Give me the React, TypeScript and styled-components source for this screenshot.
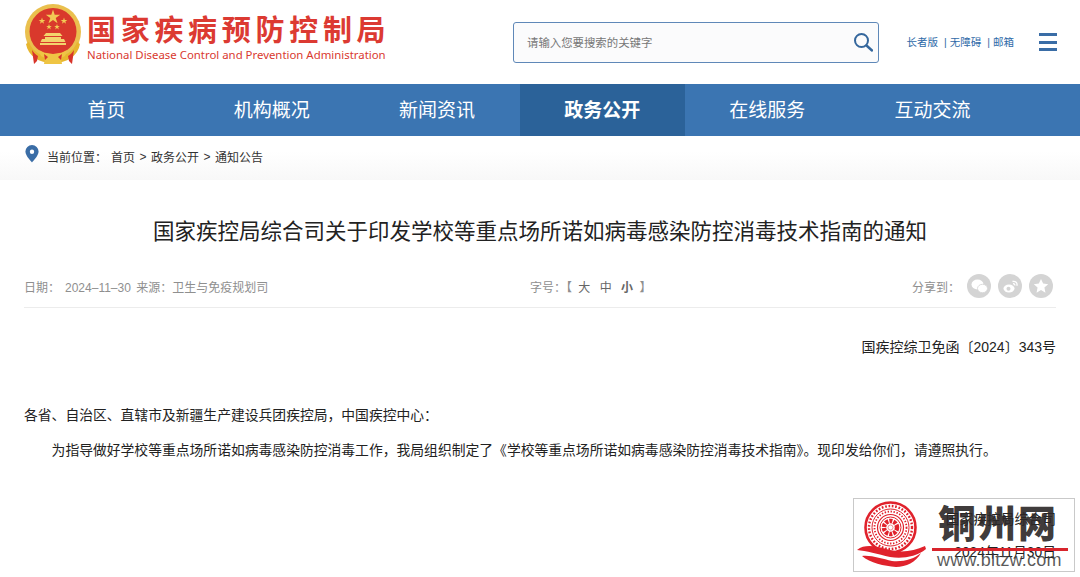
import * as React from 'react';
import styled, { createGlobalStyle } from 'styled-components';

const GlobalStyle = createGlobalStyle`
    html, body {
        margin: 0;
        padding: 0;
        background: #fff;
    }
    body {
        width: 1080px;
        height: 577px;
        overflow: hidden;
        font-family: "Liberation Sans", "Noto Sans CJK SC", sans-serif;
    }
`;

const navList = [
    { id: 'home', label: '首页' },
    { id: 'org', label: '机构概况' },
    { id: 'news', label: '新闻资讯' },
    { id: 'gov', label: '政务公开', active: true },
    { id: 'online', label: '在线服务' },
    { id: 'talk', label: '互动交流' },
];

const Page = styled.div`
    position: relative;
    width: 1080px;
    height: 577px;
    overflow: hidden;
`;

const Header = styled.header`
    display: flex;
    align-items: flex-start;
    height: 84px;
    padding: 4px 23px 0 25px;
    box-sizing: border-box;
`;

const Brand = styled.div`
    display: flex;
    width: 488px;
    flex: none;
`;

const BrandText = styled.div`
    display: flex;
    flex-direction: column;
    margin-left: 6px;
    padding-top: 6px;
`;

const BrandName = styled.div`
    font-family: "Noto Sans CJK SC", sans-serif;
    font-size: 29px;
    font-weight: 700;
    line-height: 36px;
    letter-spacing: 4.7px;
    color: #dc3a32;
    white-space: nowrap;
`;

const BrandEnglish = styled.div`
    font-family: "Noto Sans", sans-serif;
    font-size: 11.4px;
    line-height: 16px;
    margin-top: 1px;
    color: #d9392f;
    white-space: nowrap;
`;

const Search = styled.div`
    display: flex;
    align-items: center;
    justify-content: space-between;
    width: 366px;
    height: 41px;
    margin-top: 18px;
    padding: 0 4px 2px 13px;
    box-sizing: border-box;
    background: #fbfbfc;
    border: 1px solid #5f88b8;
    border-radius: 3px;
    font-size: 11.4px;
    color: #777;
`;

const SearchIcon = styled.svg`
    margin-right: 1px;
`;

const HeaderLinks = styled.div`
    display: flex;
    align-items: center;
    margin-left: 28px;
    margin-top: 31px;
    font-size: 10.5px;
    line-height: 14px;
    color: #2f6aa8;
    white-space: nowrap;
`;

const HeaderLink = styled.span`
    & + &::before {
        content: '|';
        margin: 0 3px 0 6px;
    }
`;

const Burger = styled.div`
    display: flex;
    flex-direction: column;
    gap: 4.5px;
    width: 18px;
    margin-left: 25px;
    margin-top: 29px;
`;

const BurgerLine = styled.i`
    display: block;
    height: 3px;
    background: #3a6da6;
`;

const Nav = styled.nav`
    display: flex;
    height: 52px;
    padding-left: 24px;
    background: #3b75b2;
`;

const NavItem = styled.div<{ $active?: boolean }>`
    display: flex;
    align-items: center;
    justify-content: center;
    width: 165.2px;
    padding-bottom: 3px;
    box-sizing: border-box;
    font-size: 19px;
    font-weight: ${props => (props.$active ? 700 : 400)};
    color: #fff;
    background: ${props => (props.$active ? '#2b6299' : 'transparent')};
`;

const Crumb = styled.div`
    display: flex;
    align-items: center;
    height: 44px;
    padding: 0 0 3px 25px;
    box-sizing: border-box;
    font-size: 12px;
    color: #333;
    background: linear-gradient(#fff 35%, #f8f8f8);
`;

const PinIcon = styled.svg`
    margin-top: -6px;
`;

const CrumbLabel = styled.span`
    margin: 0 4px 0 8px;
`;

const CrumbSep = styled.span`
    margin: 0 4.5px;
`;

const Main = styled.main`
    padding: 0 24px;
`;

const Title = styled.h1`
    margin: 37px 0 0;
    font-size: 21.5px;
    font-weight: 400;
    line-height: 30px;
    text-align: center;
    color: #222;
`;

const Meta = styled.div`
    display: grid;
    grid-template-columns: 506px 1fr auto;
    align-items: center;
    height: 36px;
    margin-top: 21px;
    padding-bottom: 3px;
    border-bottom: 1px solid #ececec;
    font-size: 12px;
    color: #8f8f8f;
`;

const MetaDate = styled.span`
    margin: 0 2px 0 5px;
`;

const SizeOptions = styled.span`
    & b {
        font-weight: 700;
        color: #555;
    }
    & em {
        font-style: normal;
        margin: 0 3px;
        color: #666;
    }
`;

const Share = styled.div`
    display: flex;
    align-items: center;
    gap: 7px;
    margin-right: 3px;
`;

const ShareIcon = styled.span`
    display: flex;
    align-items: center;
    justify-content: center;
    width: 24px;
    height: 24px;
    border-radius: 50%;
    background: #d4d4d4;
`;

const Paragraph = styled.p<{ $align?: string; $indent?: boolean; $top: number; $size?: number }>`
    margin: ${props => props.$top}px 0 0;
    font-size: ${props => props.$size || 13.8}px;
    line-height: 20px;
    color: #222;
    white-space: nowrap;
    text-align: ${props => props.$align || 'left'};
    text-indent: ${props => (props.$indent ? '27.600px' : 0)};
`;

const Watermark = styled.div`
    position: absolute;
    left: 853px;
    top: 498px;
    display: flex;
    width: 222px;
    height: 74px;
    box-sizing: border-box;
    border: 1px solid #c9c9c9;
`;

const WatermarkText = styled.div`
    flex: 1;
    padding-left: 6px;
`;

const WatermarkName = styled.div`
    margin-left: 6px;
    font-family: "Noto Sans CJK SC", sans-serif;
    font-size: 38px;
    font-weight: 900;
    line-height: 44px;
    letter-spacing: 2px;
    color: rgba(45, 40, 40, 0.92);
    white-space: nowrap;
`;

const WatermarkRule = styled.div`
    height: 3px;
    width: 136px;
    margin-top: 5px;
    background: #d8242c;
`;

const WatermarkUrl = styled.div`
    margin-left: 5px;
    font-size: 18px;
    line-height: 19px;
    letter-spacing: 0.2px;
    color: rgba(60, 60, 60, 0.85);
    white-space: nowrap;
`;

const Emblem: React.FC = () => (
    <svg width="56" height="61" viewBox="0 0 56 61">
        <circle cx="28" cy="28" r="28" fill="#eac04e" />
        <circle cx="28" cy="27.500" r="23.500" fill="#d9392c" />
        <path d="M28 5.500l1.700 5.300h5.500l-4.500 3.200 1.800 5.300-4.500-3.300-4.500 3.300 1.800-5.300-4.500-3.200h5.500z" fill="#f2cb55" />
        <path d="M17 13.500l.8 2.400h2.500l-2 1.500.8 2.400-2.100-1.500-2.100 1.500.8-2.400-2-1.500h2.500zM39 13.500l.8 2.400h2.500l-2 1.500.8 2.400-2.100-1.500-2.100 1.500.8-2.400-2-1.500h2.500zM24 20l.7 2h2.100l-1.700 1.300.7 2.100-1.800-1.300-1.800 1.300.7-2.100-1.700-1.300h2.100zM32 20l.7 2h2.100l-1.700 1.300.7 2.100-1.800-1.300-1.800 1.300.7-2.100-1.700-1.300h2.100z" fill="#f2cb55" />
        <path d="M21 29h14l2.500 3H18.500zM20 33h16v2h3l1.500 3h-25l1.500-3h3zM15 39h26v2H15z" fill="#f3d36c" />
        <path d="M4 38c3 9 12 15 24 15s21-6 24-15l3 2c-2 12-13 19-27 19S3 52 1 40z" fill="#e7b62f" />
        <path d="M7 46c2 3 4 5 6 6l-1 5-3 3zM49 46c-2 3-4 5-6 6l1 5 3 3z" fill="#d8342a" />
        <path d="M14 46c3 1 5 3 8 3l6 1 6-1c3 0 5-2 8-3l-2 6-4 2 1 6H19l1-6-4-2z" fill="#efc544" />
        <path d="M19 50l4 3-3 3zM37 50l-4 3 3 3z" fill="#d8342a" />
    </svg>
);

const WatermarkLogo: React.FC = () => (
    <svg width="72" height="71" viewBox="0 0 72 71">
        <g fill="none" stroke="#e0222c">
            <circle cx="36.500" cy="28.500" r="25" strokeWidth="2.600" />
            <circle cx="36.500" cy="28.500" r="21.500" strokeWidth="2.400" strokeDasharray="1.700 1.700" />
            <circle cx="36.500" cy="28.500" r="18.500" strokeWidth="1" />
            <circle cx="36.500" cy="28.500" r="16" strokeWidth="1.800" strokeDasharray="1.400 1.600" />
            <circle cx="36.500" cy="28.500" r="13" strokeWidth="1.200" />
            <circle cx="36.500" cy="28.500" r="10.500" strokeWidth="1" />
            <circle cx="36.500" cy="28.500" r="6.500" strokeWidth="4.500" strokeDasharray="3 1.100" />
        </g>
        <circle cx="36.500" cy="28.500" r="2.500" fill="#fff" stroke="#e0222c" strokeWidth="0.500" />
        <path d="M3 51C12 44 24 48 36 51C48 54 60 52 71 47L72 50C62 58 48 60 36 58C24 55 12 52 3 51Z" fill="#e0222c" />
        <path d="M8 57C18 56 28 60 38 62C50 63 60 60 67 54C62 63 52 68 42 68C30 67 16 64 8 57Z" fill="#e0222c" />
    </svg>
);

const App: React.FC = () => (
    <Page>
        <GlobalStyle />
        <Header>
            <Brand>
                <Emblem />
                <BrandText>
                    <BrandName>国家疾病预防控制局</BrandName>
                    <BrandEnglish>National Disease Control and Prevention Administration</BrandEnglish>
                </BrandText>
            </Brand>
            <Search>
                <span>请输入您要搜索的关键字</span>
                <SearchIcon width="20" height="20" viewBox="0 0 20 20" fill="none" stroke="#35679d">
                    <circle cx="8.500" cy="8.500" r="6.500" strokeWidth="2" />
                    <path d="M13.500 13.500L19 18.500" strokeWidth="2.400" strokeLinecap="round" />
                </SearchIcon>
            </Search>
            <HeaderLinks>
                <HeaderLink>长者版</HeaderLink>
                <HeaderLink>无障碍</HeaderLink>
                <HeaderLink>邮箱</HeaderLink>
            </HeaderLinks>
            <Burger>
                <BurgerLine />
                <BurgerLine />
                <BurgerLine />
            </Burger>
        </Header>
        <Nav>
            {navList.map(item => (
                <NavItem key={item.id} $active={item.active}>{item.label}</NavItem>
            ))}
        </Nav>
        <Crumb>
            <PinIcon width="14" height="18" viewBox="0 0 14 18">
                <path fillRule="evenodd" d="M7 0a6.600 6.600 0 0 1 6.600 6.600C13.600 11 7 17.500 7 17.500S.4 11 .4 6.600A6.600 6.600 0 0 1 7 0zm0 4.500a2.200 2.200 0 1 0 0 4.400 2.200 2.200 0 0 0 0-4.400z" fill="#3a6da6" />
            </PinIcon>
            <CrumbLabel>当前位置：</CrumbLabel>
            <span>首页</span>
            <CrumbSep>&gt;</CrumbSep>
            <span>政务公开</span>
            <CrumbSep>&gt;</CrumbSep>
            <span>通知公告</span>
        </Crumb>
        <Main>
            <Title>国家疾控局综合司关于印发学校等重点场所诺如病毒感染防控消毒技术指南的通知</Title>
            <Meta>
                <span>日期：<MetaDate>2024–11–30</MetaDate> 来源：卫生与免疫规划司</span>
                <SizeOptions>字号：【 <em>大</em> <em>中</em> <b><em>小</em></b> 】</SizeOptions>
                <Share>
                    <span>分享到：</span>
                    <ShareIcon>
                        <svg width="17" height="15" viewBox="0 0 17 15" fill="#fff">
                            <ellipse cx="6.500" cy="5.500" rx="6" ry="5" />
                            <ellipse cx="11.500" cy="9.500" rx="5" ry="4.200" stroke="#d4d4d4" strokeWidth="0.800" />
                        </svg>
                    </ShareIcon>
                    <ShareIcon>
                        <svg width="17" height="15" viewBox="0 0 17 15" fill="none" stroke="#fff">
                            <ellipse cx="7" cy="9.500" rx="5.500" ry="4" fill="#fff" stroke="none" />
                            <circle cx="6.500" cy="9.700" r="2" fill="#d4d4d4" stroke="none" />
                            <path d="M10.500 2.500c3-.8 5.300 1.500 4.300 4.300M11 4.800c1.300-.3 2 .5 1.700 1.700" strokeWidth="1.300" />
                        </svg>
                    </ShareIcon>
                    <ShareIcon>
                        <svg width="16" height="16" viewBox="0 0 14 14" fill="#fff">
                            <path d="M7 .8l1.900 4.100 4.400.5-3.300 3 .9 4.400L7 10.600l-3.900 2.200.9-4.400-3.300-3 4.400-.5z" />
                        </svg>
                    </ShareIcon>
                </Share>
            </Meta>
            <Paragraph $align="right" $top={29} $size={14}>国疾控综卫免函〔2024〕343号</Paragraph>
            <Paragraph $top={49}>各省、自治区、直辖市及新疆生产建设兵团疾控局，中国疾控中心：</Paragraph>
            <Paragraph $indent $top={15}>为指导做好学校等重点场所诺如病毒感染防控消毒工作，我局组织制定了《学校等重点场所诺如病毒感染防控消毒技术指南》。现印发给你们，请遵照执行。</Paragraph>
            <Paragraph $align="right" $top={49}>国家疾控局综合司</Paragraph>
            <Paragraph $align="right" $top={13}>2024年11月30日</Paragraph>
        </Main>
        <Watermark>
            <WatermarkLogo />
            <WatermarkText>
                <WatermarkName>铜州网</WatermarkName>
                <WatermarkRule />
                <WatermarkUrl>www.bltzw.com</WatermarkUrl>
            </WatermarkText>
        </Watermark>
    </Page>
);

export default App;
